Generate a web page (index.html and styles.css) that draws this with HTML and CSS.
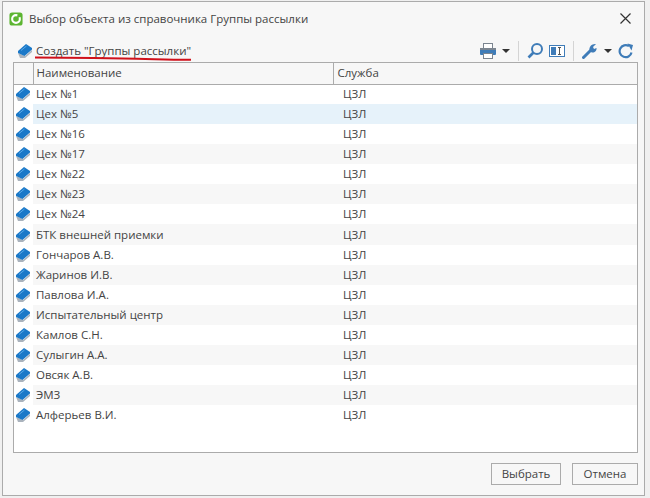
FILE: index.html
```html
<!DOCTYPE html>
<html lang="ru">
<head>
    <meta charset="UTF-8">
    <meta name="viewport" content="width=device-width, initial-scale=1.0">
    <title>Выбор объекта</title>
    <link rel="stylesheet" href="styles.css">
</head>
<body>
    <svg class="defs" width="0" height="0">
        <symbol id="book" viewBox="0 0 16 16">
            <path d="M3 15 L1 10 L8 13 L15 7 L15 9 L8 15 Z" fill="#aab3bd"/>
            <path d="M1 8 L9 1 L15 5 L15 6.5 L7.5 13 L1 10 Z" fill="#1a78c8"/>
            <path d="M4 7.5 L9.5 3" stroke="#5aaae8" stroke-width="1" fill="none"/>
        </symbol>
    </svg>

    <div class="window">
        <div class="title-bar">
            <svg class="app-icon" width="14" height="14" viewBox="0 0 16 16">
                <rect x="0.5" y="0.5" width="15" height="15" rx="3" fill="#5cb531"/>
                <circle cx="8" cy="8" r="4.4" fill="none" stroke="#fff" stroke-width="2.4"/>
                <path d="M10 1.5 L14 5 L9 7 Z" fill="#5cb531"/>
            </svg>
            <span class="title">Выбор объекта из справочника Группы рассылки</span>
            <svg class="close" width="11" height="11" viewBox="0 0 11 11">
                <path d="M0.5 0.5 L10.5 10.5 M10.5 0.5 L0.5 10.5" stroke="#333" stroke-width="1.2"/>
            </svg>
        </div>

        <div class="toolbar">
            <svg class="create-icon" width="16" height="16"><use href="#book"/></svg>
            <a class="create-link">Создать "Группы рассылки"</a>
            <svg class="underline" width="160" height="7" viewBox="0 0 160 7">
                <path d="M2 2.5 C40 3 60 3 90 3.5 C120 4 140 5 158 4.8" fill="none" stroke="#d0111b" stroke-width="2"/>
            </svg>
            <div class="tools">
                <svg width="16" height="16" viewBox="0 0 16 16">
                    <rect x="3.5" y="0.5" width="9" height="5" fill="#fff" stroke="#7b8590"/>
                    <rect x="0" y="5" width="16" height="7" rx="1" fill="#3f7cb8"/>
                    <rect x="0" y="5" width="16" height="2" fill="#7b8590"/>
                    <rect x="3.5" y="10.5" width="9" height="5" fill="#fff" stroke="#7b8590"/>
                </svg>
                <span class="caret"></span>
                <span class="sep"></span>
                <svg width="16" height="16" viewBox="0 0 16 16">
                    <circle cx="10" cy="6" r="5" fill="none" stroke="#3f7cb8" stroke-width="2"/>
                    <path d="M6.5 9.5 L1.5 14.5" stroke="#3f7cb8" stroke-width="2.6"/>
                </svg>
                <svg class="field-icon" width="16" height="12" viewBox="0 0 16 12">
                    <rect x="0.5" y="0.5" width="15" height="11" fill="#fff" stroke="#3f7cb8"/>
                    <rect x="2" y="2" width="5" height="8" fill="#3f7cb8"/>
                    <path d="M9 2.5 H12 M10.5 2.5 V9.5 M9 9.5 H12" stroke="#555" stroke-width="1" fill="none"/>
                </svg>
                <span class="sep"></span>
                <svg width="16" height="16" viewBox="0 0 16 16">
                    <path d="M1.5 14.5 L8.5 7.5" stroke="#3f7cb8" stroke-width="3" stroke-linecap="round"/>
                    <path d="M7.5 7 C7 3.5 10 0.5 14 1 L11 4 L12 6 L14.5 5 C15 8.5 11.5 10.5 9 9 Z" fill="#3f7cb8"/>
                </svg>
                <span class="caret"></span>
                <svg class="refresh" width="16" height="16" viewBox="0 0 16 16">
                    <path d="M13.5 9.5 A6 6 0 1 1 11 3.2" fill="none" stroke="#3f7cb8" stroke-width="2.2"/>
                    <path d="M9.5 0.5 L15 2 L13.5 7.5 Z" fill="#3f7cb8"/>
                </svg>
            </div>
        </div>

        <div class="grid">
            <table>
                <thead>
                    <tr>
                        <th class="col-icon"></th>
                        <th class="col-name">Наименование</th>
                        <th class="col-service">Служба</th>
                    </tr>
                </thead>
                <tbody>
                    <tr><td class="col-icon"><svg width="16" height="16"><use href="#book"/></svg></td><td>Цех №1</td><td class="service">ЦЗЛ</td></tr>
                    <tr class="selected"><td class="col-icon"><svg width="16" height="16"><use href="#book"/></svg></td><td>Цех №5</td><td class="service">ЦЗЛ</td></tr>
                    <tr><td class="col-icon"><svg width="16" height="16"><use href="#book"/></svg></td><td>Цех №16</td><td class="service">ЦЗЛ</td></tr>
                    <tr class="alt"><td class="col-icon"><svg width="16" height="16"><use href="#book"/></svg></td><td>Цех №17</td><td class="service">ЦЗЛ</td></tr>
                    <tr><td class="col-icon"><svg width="16" height="16"><use href="#book"/></svg></td><td>Цех №22</td><td class="service">ЦЗЛ</td></tr>
                    <tr class="alt"><td class="col-icon"><svg width="16" height="16"><use href="#book"/></svg></td><td>Цех №23</td><td class="service">ЦЗЛ</td></tr>
                    <tr><td class="col-icon"><svg width="16" height="16"><use href="#book"/></svg></td><td>Цех №24</td><td class="service">ЦЗЛ</td></tr>
                    <tr class="alt tall"><td class="col-icon"><svg width="16" height="16"><use href="#book"/></svg></td><td>БТК внешней приемки</td><td class="service">ЦЗЛ</td></tr>
                    <tr><td class="col-icon"><svg width="16" height="16"><use href="#book"/></svg></td><td>Гончаров А.В.</td><td class="service">ЦЗЛ</td></tr>
                    <tr class="alt"><td class="col-icon"><svg width="16" height="16"><use href="#book"/></svg></td><td>Жаринов И.В.</td><td class="service">ЦЗЛ</td></tr>
                    <tr><td class="col-icon"><svg width="16" height="16"><use href="#book"/></svg></td><td>Павлова И.А.</td><td class="service">ЦЗЛ</td></tr>
                    <tr class="alt"><td class="col-icon"><svg width="16" height="16"><use href="#book"/></svg></td><td>Испытательный центр</td><td class="service">ЦЗЛ</td></tr>
                    <tr><td class="col-icon"><svg width="16" height="16"><use href="#book"/></svg></td><td>Камлов С.Н.</td><td class="service">ЦЗЛ</td></tr>
                    <tr class="alt"><td class="col-icon"><svg width="16" height="16"><use href="#book"/></svg></td><td>Сулыгин А.А.</td><td class="service">ЦЗЛ</td></tr>
                    <tr><td class="col-icon"><svg width="16" height="16"><use href="#book"/></svg></td><td>Овсяк А.В.</td><td class="service">ЦЗЛ</td></tr>
                    <tr class="alt"><td class="col-icon"><svg width="16" height="16"><use href="#book"/></svg></td><td>ЭМЗ</td><td class="service">ЦЗЛ</td></tr>
                    <tr><td class="col-icon"><svg width="16" height="16"><use href="#book"/></svg></td><td>Алферьев В.И.</td><td class="service">ЦЗЛ</td></tr>
                </tbody>
            </table>
        </div>

        <div class="footer">
            <button class="btn btn-select">Выбрать</button>
            <button class="btn btn-cancel">Отмена</button>
        </div>
    </div>
</body>
</html>
```

FILE: styles.css
```css
html, body {
    height: 100%;
}
body {
    margin: 0;
    padding: 1px 5px 2px 2px;
    box-sizing: border-box;
    height: 498px;
    overflow: hidden;
    background-color: #f0f0f0;
    font-family: "Open Sans", "Noto Sans", sans-serif;
    font-size: 11.5px;
    color: #444;
}
.defs {
    position: absolute;
}
.window {
    box-sizing: border-box;
    height: 100%;
    display: flex;
    flex-direction: column;
    padding: 0 6px 10px 10px;
    background-color: #f7f7f7;
    border: 1px solid #ababab;
}
.title-bar {
    box-sizing: border-box;
    display: flex;
    align-items: center;
    height: 29px;
    padding-top: 4px;
    margin-left: -4px;
    flex-shrink: 0;
}
.app-icon {
    margin-right: 6px;
}
.title {
    flex: 1;
    color: #444;
}
.close {
    margin-right: 7px;
}
.toolbar {
    box-sizing: border-box;
    position: relative;
    display: flex;
    align-items: center;
    height: 31px;
    padding: 8px 0 0 4px;
    flex-shrink: 0;
}
.create-icon {
    margin-right: 3px;
}
.create-link {
    color: #444;
}
.underline {
    position: absolute;
    left: 20px;
    top: 24px;
}
.tools {
    margin-left: auto;
    display: flex;
    align-items: center;
    gap: 6px;
    padding-right: 4px;
}
.caret {
    width: 0;
    height: 0;
    border-left: 4px solid transparent;
    border-right: 4px solid transparent;
    border-top: 4px solid #333;
}
.sep {
    width: 1px;
    height: 20px;
    margin: 0 2px;
    background-color: #d4d4d4;
}
.grid {
    flex: 1;
    background-color: #fff;
    border: 1px solid #ababab;
    overflow: hidden;
}
table {
    width: 100%;
    border-collapse: collapse;
    table-layout: fixed;
}
th {
    box-sizing: border-box;
    height: 21px;
    padding: 0 0 2px 3px;
    text-align: left;
    font-weight: normal;
    background-color: #f7f7f7;
    border-bottom: 1px solid #ababab;
    border-left: 1px solid #ababab;
}
th:first-child {
    border-left: none;
}
th.col-service {
    padding-left: 4px;
}
td {
    box-sizing: border-box;
    height: 20px;
    padding: 0 0 2px 3px;
    white-space: nowrap;
}
td.col-icon {
    width: 19px;
    padding: 0 0 0 1px;
    background-color: #fff;
    line-height: 0;
}
th.col-icon {
    width: 19px;
    background-color: #f7f7f7;
}
.col-name {
    width: 300px;
}
td.service {
    padding-left: 10px;
}
.tall td {
    height: 21px;
    padding-top: 1px;
}
.alt td:not(.col-icon) {
    background-color: #f7f7f7;
}
.selected td:not(.col-icon) {
    background-color: #e6f2fa;
}
.footer {
    display: flex;
    justify-content: flex-end;
    gap: 11px;
    padding-top: 10px;
    flex-shrink: 0;
}
.btn {
    height: 22px;
    padding: 0 0 2px;
    font-family: inherit;
    font-size: inherit;
    color: #444;
    background-color: #f7f7f7;
    border: 1px solid #ababab;
}
.btn-select {
    width: 70px;
}
.btn-cancel {
    width: 66px;
}
```
